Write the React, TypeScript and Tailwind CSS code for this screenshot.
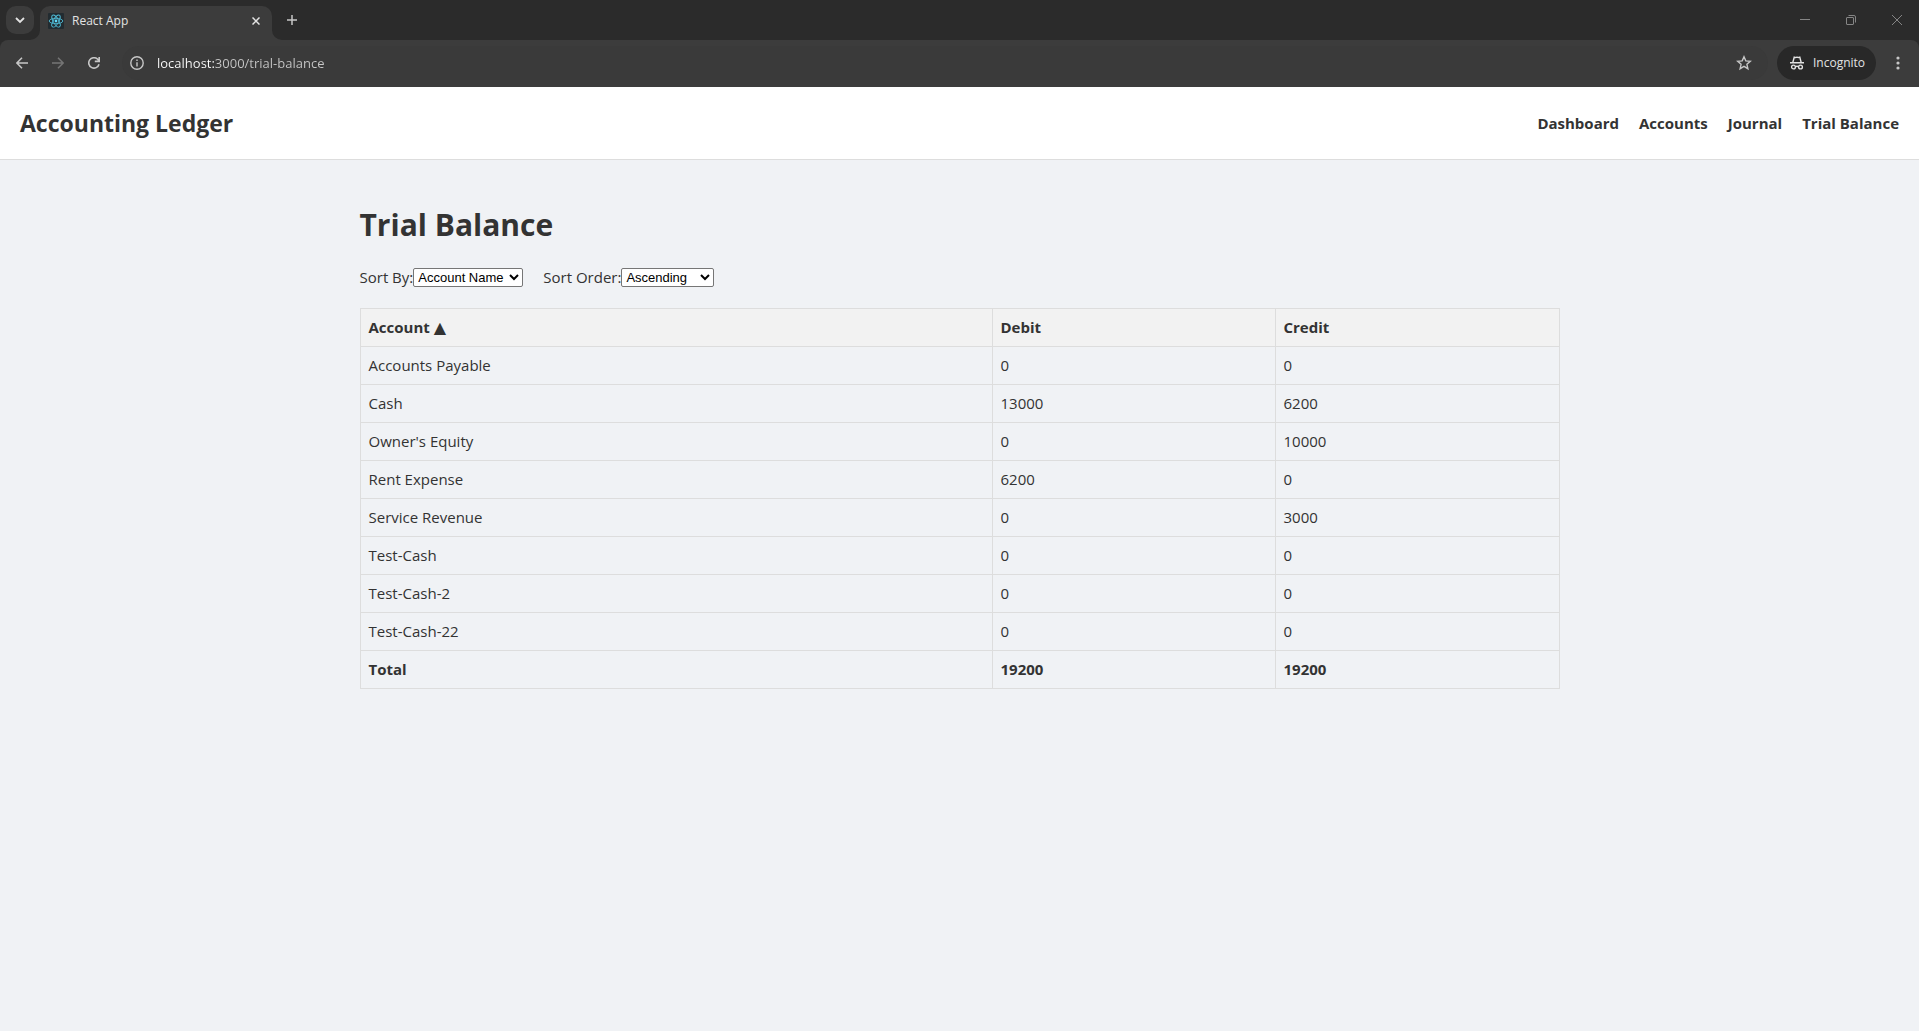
import { useState } from "react";

const rows: [string, number, number][] = [
  ["Accounts Payable", 0, 0],
  ["Cash", 13000, 6200],
  ["Owner's Equity", 0, 10000],
  ["Rent Expense", 6200, 0],
  ["Service Revenue", 0, 3000],
  ["Test-Cash", 0, 0],
  ["Test-Cash-2", 0, 0],
  ["Test-Cash-22", 0, 0],
];

const links = ["Dashboard", "Accounts", "Journal", "Trial Balance"];

function ReactLogo() {
  return (
    <svg width="16" height="16" viewBox="0 0 16 16" className="shrink-0">
      <rect width="16" height="16" rx="1" fill="#222b30" />
      <g fill="none" stroke="#4fb9d3" strokeWidth="0.9">
        <ellipse cx="8" cy="8" rx="6.8" ry="2.7" />
        <ellipse cx="8" cy="8" rx="6.8" ry="2.7" transform="rotate(60 8 8)" />
        <ellipse cx="8" cy="8" rx="6.8" ry="2.7" transform="rotate(120 8 8)" />
      </g>
      <circle cx="8" cy="8" r="1.4" fill="#61dafb" />
    </svg>
  );
}

function TabStrip() {
  return (
    <div className="flex h-10 items-end bg-[#2b2b2b]">
      <div className="flex h-10 w-[30px] shrink-0 items-start pt-[6px] pl-[6px]">
        <button aria-label="Search tabs" className="flex size-7 shrink-0 items-center justify-center rounded-[10px] bg-[#3c3c3c]">
          <svg width="10" height="10" viewBox="0 0 10 10" fill="none" stroke="#e3e3e3" strokeWidth="1.8">
            <path d="M1 3l4 4 4-4" />
          </svg>
        </button>
      </div>
      <svg width="10" height="10" viewBox="0 0 10 10" className="shrink-0">
        <path d="M0 10A10 10 0 0 0 10 0V10z" fill="#3c3c3c" />
      </svg>
      <div className="flex h-[34px] w-[232px] items-center rounded-t-[10px] bg-[#3c3c3c] pr-2 pb-[5px] pl-2">
        <ReactLogo />
        <span className="ml-2 flex-1 text-xs text-[#e3e3e3]">React App</span>
        <button aria-label="Close tab" className="flex size-4 items-center justify-center">
          <svg width="8" height="8" viewBox="0 0 8 8" stroke="#e3e3e3" strokeWidth="1.5">
            <path d="M0.5 0.5l7 7M7.5 0.5l-7 7" />
          </svg>
        </button>
      </div>
      <svg width="10" height="10" viewBox="0 0 10 10" className="shrink-0">
        <path d="M10 10A10 10 0 0 1 0 0V10z" fill="#3c3c3c" />
      </svg>
      <button aria-label="New tab" className="mb-[6px] flex h-7 w-5 items-center justify-center">
        <svg width="10" height="10" viewBox="0 0 10 10" stroke="#c7c7c7" strokeWidth="1.5">
          <path d="M5 0v10M0 5h10" />
        </svg>
      </button>
      <div className="flex-1" />
      <div className="flex h-10 items-center">
        <button aria-label="Minimize" className="flex h-10 w-[46px] items-center justify-center">
          <svg width="10" height="10" viewBox="0 0 10 10" stroke="#858585"><path d="M0 4.5h10" /></svg>
        </button>
        <button aria-label="Restore" className="flex h-10 w-[46px] items-center justify-center">
          <svg width="10" height="10" viewBox="0 0 10 10" fill="none" stroke="#858585">
            <rect x="0.5" y="2.5" width="7" height="7" rx="0.5" />
            <path d="M2.5 0.5H8a1.500 1.500 0 0 1 1.500 1.500V7.500" />
          </svg>
        </button>
        <button aria-label="Close" className="flex h-10 w-[45px] items-center justify-center">
          <svg width="10" height="10" viewBox="0 0 10 10" stroke="#858585"><path d="M0 0l10 10M10 0L0 10" /></svg>
        </button>
      </div>
    </div>
  );
}

function Toolbar() {
  return (
    <div className="bg-[#2b2b2b]">
      <div className="flex h-[47px] items-center rounded-t-lg bg-[#3c3c3c] pr-[13px] pb-[1px] pl-[14px]">
        <button aria-label="Back" className="flex size-4 items-center justify-center">
          <svg width="12" height="12" viewBox="0 0 12 12" fill="none" stroke="#c7c7c7" strokeWidth="1.5"><path d="M12 6H1M6 .7L.9 6 6 11.300" /></svg>
        </button>
        <button aria-label="Forward" className="ml-5 flex size-4 items-center justify-center">
          <svg width="12" height="12" viewBox="0 0 12 12" fill="none" stroke="#757575" strokeWidth="1.5"><path d="M0 6h11M6 .7L11.100 6 6 11.300" /></svg>
        </button>
        <button aria-label="Reload" className="ml-5 flex size-4 items-center justify-center">
          <svg width="12" height="12" viewBox="0 0 12 12" fill="none" stroke="#c7c7c7" strokeWidth="1.6"><path d="M11 7.200A5.200 5.200 0 1 1 9.700 2.300L11 3.700M11.200 0V4.400H6.800" /></svg>
        </button>
        <div className="ml-5 flex h-[34px] flex-1 items-center rounded-full bg-[#3a3a3a] pr-4 pl-2">
          <svg width="14" height="14" viewBox="0 0 14 14" fill="none" stroke="#c7c7c7" strokeWidth="1.4" className="shrink-0">
            <circle cx="7" cy="7" r="6.200" />
            <path d="M7 6.300V10.500M7 3.500V5" />
          </svg>
          <input
            aria-label="Address"
            defaultValue="localhost:3000/trial-balance"
            className="ml-[13px] h-5 min-w-0 flex-1 bg-[linear-gradient(90deg,#ffffff_58px,#c7c7c7_58px)] bg-clip-text text-[13px] text-transparent caret-white outline-none"
          />
          <button aria-label="Bookmark this tab" className="flex size-4 items-center justify-center">
            <svg width="16" height="16" viewBox="0 0 16 16" fill="none" stroke="#c7c7c7" strokeWidth="1.4"><path d="M8 1.800l1.800 4.100 4.500.4-3.400 3 1 4.400L8 11.400l-3.900 2.300 1-4.400-3.400-3 4.500-.4z" /></svg>
          </button>
        </div>
        <button className="ml-[9px] flex h-[34px] w-[99px] items-center rounded-full bg-[#282828] pl-[13px] text-xs text-[#e3e3e3]">
          <svg width="14" height="14" viewBox="0 0 14 14" fill="none" stroke="#e3e3e3" strokeWidth="1.4">
            <path d="M0 6.700h14M2.800 6.500L4.200 1.200q1.400.7 2.800 0 1.400.7 2.800 0L11.200 6.500" />
            <circle cx="3.500" cy="11" r="1.900" /><circle cx="10.500" cy="11" r="1.900" /><path d="M5.400 10.700q1.600-.8 3.200 0" />
          </svg>
          <span className="ml-[9px]">Incognito</span>
        </button>
        <button aria-label="Menu" className="ml-[14px] flex size-4 items-center justify-center">
          <svg width="4" height="14" viewBox="0 0 4 14" fill="#c7c7c7"><circle cx="2" cy="2" r="1.600" /><circle cx="2" cy="7" r="1.600" /><circle cx="2" cy="12" r="1.600" /></svg>
        </button>
      </div>
    </div>
  );
}

const cell = "border border-[#dddddd] px-2 py-2 text-left";
const select =
  "h-[19px] rounded-[2px] border border-[#767676] bg-white font-['Liberation_Sans',Arial,sans-serif] text-[13px] text-black appearance-auto";

export default function App() {
  const [sortBy, setSortBy] = useState("Account Name");
  const [order, setOrder] = useState("Ascending");
  return (
    <div className="min-h-screen bg-[#f0f2f5] font-['Open_Sans','Noto_Sans',sans-serif] text-[15px] text-[#333333]">
      <TabStrip />
      <Toolbar />
      <header className="flex items-center justify-between border-b border-[#dddddd] bg-white px-5 py-5">
        <div className="text-[23px] leading-8 font-bold">Accounting Ledger</div>
        <nav className="flex gap-5 font-bold">
          {links.map((l) => (
            <a key={l} href="#">{l}</a>
          ))}
        </nav>
      </header>
      <main className="mx-auto max-w-[1200px] pt-[43px]">
        <h1 className="text-[30px] leading-[43px] font-bold">Trial Balance</h1>
        <div className="mt-[21px] flex h-[21px] items-center gap-5 leading-[21px]">
          <div className="flex items-center">
            <label htmlFor="by">Sort By:</label>
            <select id="by" className={`${select} w-[110px]`} value={sortBy} onChange={(e) => setSortBy(e.target.value)}>
              <option>Account Name</option>
              <option>Debit</option>
              <option>Credit</option>
            </select>
          </div>
          <div className="flex items-center">
            <label htmlFor="order">Sort Order:</label>
            <select id="order" className={`${select} w-[93px]`} value={order} onChange={(e) => setOrder(e.target.value)}>
              <option>Ascending</option>
              <option>Descending</option>
            </select>
          </div>
        </div>
        <table className="mt-5 w-full table-fixed border-collapse leading-[21px]">
          <colgroup>
            <col />
            <col className="w-[283px]" />
            <col className="w-[284px]" />
          </colgroup>
          <thead className="bg-[#f2f2f2]">
            <tr>
              <th className={cell}>
                Account <span className="font-['DejaVu_Sans'] text-base leading-none">▲</span>
              </th>
              <th className={cell}>Debit</th>
              <th className={cell}>Credit</th>
            </tr>
          </thead>
          <tbody>
            {rows.map(([name, debit, credit]) => (
              <tr key={name}>
                <td className={cell}>{name}</td>
                <td className={cell}>{debit}</td>
                <td className={cell}>{credit}</td>
              </tr>
            ))}
          </tbody>
          <tfoot className="font-bold">
            <tr>
              <td className={cell}>Total</td>
              <td className={cell}>19200</td>
              <td className={cell}>19200</td>
            </tr>
          </tfoot>
        </table>
      </main>
    </div>
  );
}
